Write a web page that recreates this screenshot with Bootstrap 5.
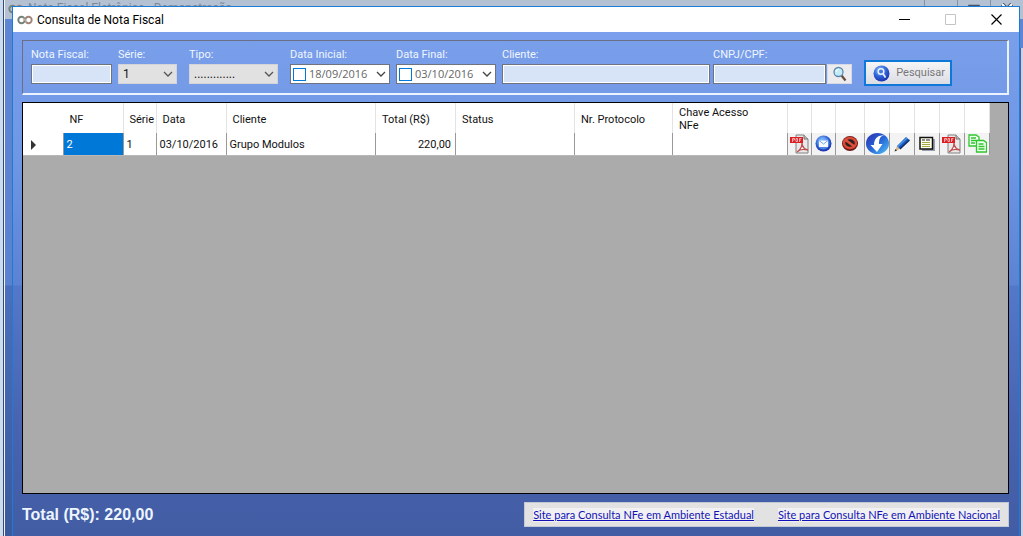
<!DOCTYPE html>
<html lang="pt-BR">
<head>
<meta charset="utf-8">
<meta name="viewport" content="width=device-width, initial-scale=1">
<title>Consulta de Nota Fiscal</title>
<link href="https://cdn.jsdelivr.net/npm/bootstrap@5.3.0/dist/css/bootstrap.min.css" rel="stylesheet">
<style>
body{font:11px/14px Roboto,"Liberation Sans",sans-serif;color:#111;background:#d9e6f6;overflow:hidden}
.parent-win{inset:0 0 0 0;border-left:3px solid #c9dcf2;background:linear-gradient(#5d86d4,#5b82d0 285px,#4a6fbc 286px,#3a5a9e)}
.parent-win::before{content:"";position:absolute;inset:0 auto 0 0;width:2px;border-left:1px solid #3d4a60;background:#eef4fb}
.parent-bar{height:19px;background:#b3c1d3;color:#7d8896;font:12px/16px Roboto,sans-serif;padding-left:5px}
.parent-edge{inset:48px 0 0 auto;width:3px;background:#4a5f96;border-right:2px solid #c8d2e8}
.caption-box{width:33px;border-left:1px solid #8492a6;color:#4b5563}
.dialog-win{margin:6px 3px 0 12px;height:calc(100vh - 6px);border:1px solid #1c7bd4;border-bottom:0;background:linear-gradient(#7ca0ec,#6f97e4 150px,#5c82d2 278px,#5478c8 279px,#4863b0 420px,#425da3)}
.titlebar{height:25px;background:#fff;font:12px/24px Roboto,sans-serif;color:#000}
.caption-btn{width:46px;height:25px;border:0;background:none;padding:0}
.work{padding:8px 10px 9px 9px}
.filters{height:55px;border:1px solid #6b6f86;border-right:2px solid #eaf3ff;border-bottom:2px solid #eaf3ff;padding:7px 55px 0 8px;gap:3px;color:#f0f6ff}
.filters label{display:block;line-height:14px;height:16px;white-space:nowrap}
.s6{margin-left:3px}
.s12{margin-left:9px}
.field{display:block;width:100%;height:20px;border:1px solid #6d7480;outline:1px solid #fff;outline-offset:-2px;border-radius:0;background:#d7e4f8;padding:0 4px}
.combo{height:20px;min-height:0;border:1px solid #d2d4d8;border-radius:0;padding:0 18px 0 4px;font-size:12px;line-height:18px;color:#111;background:#e1e1e1 url("data:image/svg+xml,%3Csvg xmlns='http://www.w3.org/2000/svg' viewBox='0 0 10 6'%3E%3Cpath d='M1 1l4 4 4-4' fill='none' stroke='%23555' stroke-width='1.3'/%3E%3C/svg%3E") no-repeat right 3px center/10px 6px}
.datebox{width:100px;height:20px;background:#fff;border:1px solid #6d7480;padding:0 3px 0 2px}
.datebox input[type=text]{width:64px;border:0;padding:0;background:none;font:11px/18px "Open Sans",sans-serif;color:#666}
.datebox button{border:0;background:none;padding:0;line-height:0}
.tick{appearance:none;width:13px;height:13px;border:1px solid #0078d7;background:#fff;margin:0 3px 0 0;flex:none}
.lookup{width:25px;height:20px;border:1px solid #d5dae4;background:#ececee;padding:0;margin:16px 0 0 -2px}
.search-btn{width:88px;height:26px;border:2px solid #0d78d8;border-radius:0;background:linear-gradient(#f5f5f7,#dcdde4);padding:0 5px 0 7px;margin-top:12px;font:11px/20px Roboto,sans-serif;color:#777}
.gridview{margin-top:7px;border:1px solid #000;background:#ababab;padding-right:18px}
.gridview table{width:100%;table-layout:fixed;border-collapse:collapse;background:#fff}
.gridview th{height:30px;font-weight:400;padding:2px 0 0 6px;border-right:1px solid #e3e3e3;white-space:nowrap;line-height:13px;vertical-align:middle}
.gridview td{height:22px;padding:2px 4px 0 3px;border-right:1px solid #999;border-bottom:1px solid #b8b8b8;white-space:nowrap}
.gridview th:first-child{border-right-color:#fff}
.gridview td.act{padding:0;text-align:center;background:#f3f3f3}
.act button{border:0;background:none;padding:0;display:block;margin:auto;line-height:0}
.gridview td.chosen{background:#0078d7;color:#fff}
.total-line{font:bold 16px/24px "Liberation Sans",sans-serif;color:#eef5ff}
.linkbox{height:25px;background:#e2e2e2;border:1px solid #c3c9d4;padding:0 8px;gap:24px;font-family:Lato,sans-serif}
.linkbox a{color:#1111b5;background:#f1f1f3}
</style>
</head>
<body>
<svg width="0" height="0" class="position-absolute" aria-hidden="true">
<defs>
<radialGradient id="ball" cx=".4" cy=".3" r=".8"><stop offset="0" stop-color="#8cc2ff"/><stop offset=".5" stop-color="#2f62d4"/><stop offset="1" stop-color="#1522a0"/></radialGradient>
<linearGradient id="orb" x1="0" y1="0" x2="1" y2="1"><stop offset="0" stop-color="#2d2fae"/><stop offset=".5" stop-color="#2766d8"/><stop offset="1" stop-color="#53c4f4"/></linearGradient>
<symbol id="pdf" viewBox="0 0 20 20"><path d="M6 1h8l4 4v14H6z" fill="#e9e9e9" stroke="#808080"/><path d="M14 1v4h4" fill="#bbb" stroke="#777"/><path d="M7 18c3-2 5-5 5-9 0 4 3 7 6 7-4-1-8-1-11 2z" fill="#fff" stroke="#c05050" stroke-width="1.300"/><path d="M0 3h13v6H0z" fill="#dc1f24"/><path d="M2.500 8V4.500h2v1.500h-2M6 4.500v3h1.500V4.500zM9.500 8V4.500h2M9.500 6h1.500" fill="none" stroke="#ffc9c9" stroke-width=".8"/></symbol>
<symbol id="rings" viewBox="0 0 16 10"><circle cx="4.500" cy="5" r="3.200" fill="none" stroke="#75807a" stroke-width="1.900"/><circle cx="11.500" cy="5" r="3.200" fill="none" stroke="#a08478" stroke-width="1.900"/><path d="M6 3l4 4" stroke="#b9b4a8" stroke-width="1.500"/></symbol>
</defs>
</svg>
<div class="parent-win position-absolute">
  <div class="parent-bar d-flex overflow-hidden">
    <svg width="16" height="10" class="me-1 mt-1"><use href="#rings"/></svg>
    <span>Nota Fiscal Eletrônica - Demonstração</span>
    <span class="caption-box ms-auto"></span>
    <span class="caption-box text-center"><svg width="12" height="12"><path d="M1 2.500h10v9H1zM4 6h4v3H4z" fill="none" stroke="#465064" stroke-width="1.500"/></svg></span>
    <span class="caption-box text-center"><svg width="12" height="12"><path d="M1 1l10 10M11 1L1 11" stroke="#465064" stroke-width="4"/><path d="M1 1l10 10M11 1L1 11" stroke="#fff" stroke-width="2"/></svg></span>
  </div>
  <div class="parent-edge position-absolute"></div>
</div>
<main class="dialog-win position-relative d-flex flex-column">
  <header class="titlebar d-flex align-items-center">
    <svg width="16" height="10" class="ms-1"><use href="#rings"/></svg>
    <span class="ms-1">Consulta de Nota Fiscal</span>
    <button class="caption-btn ms-auto" aria-label="Minimizar"><svg width="11" height="11" class="d-block mx-auto"><path d="M0 5.500h11" stroke="#000"/></svg></button>
    <button class="caption-btn" aria-label="Maximizar" disabled><svg width="11" height="11" class="d-block mx-auto"><path d="M.5.500h10v10H.5z" fill="none" stroke="#c4c4c4"/></svg></button>
    <button class="caption-btn" aria-label="Fechar"><svg width="11" height="11" class="d-block mx-auto"><path d="M.5.500l10 10M10.500.500l-10 10" stroke="#000" stroke-width="1.200"/></svg></button>
  </header>
  <div class="work flex-grow-1 d-flex flex-column">
    <form class="filters d-flex align-items-start">
      <div style="width:81px"><label for="nf">Nota Fiscal:</label><input id="nf" class="field"></div>
      <div class="s6" style="width:59px"><label for="serie">Série:</label><select id="serie" class="form-select combo"><option>1</option></select></div>
      <div class="s12" style="width:89px"><label for="tipo">Tipo:</label><select id="tipo" class="form-select combo"><option>.............</option></select></div>
      <div class="s12"><label for="di">Data Inicial:</label><div class="datebox d-flex align-items-center"><input type="checkbox" class="tick" aria-label="Usar data inicial"><input type="text" id="di" value="18/09/2016"><button type="button" class="ms-auto" aria-label="Abrir calendário"><svg width="10" height="6"><path d="M1 1l4 4 4-4" fill="none" stroke="#444" stroke-width="1.300"/></svg></button></div></div>
      <div class="s6"><label for="df">Data Final:</label><div class="datebox d-flex align-items-center"><input type="checkbox" class="tick" aria-label="Usar data final"><input type="text" id="df" value="03/10/2016"><button type="button" class="ms-auto" aria-label="Abrir calendário"><svg width="10" height="6"><path d="M1 1l4 4 4-4" fill="none" stroke="#444" stroke-width="1.300"/></svg></button></div></div>
      <div class="s6 flex-grow-1"><label for="cli">Cliente:</label><input id="cli" class="field"></div>
      <div style="width:113px"><label for="doc">CNPJ/CPF:</label><input id="doc" class="field"></div>
      <button type="button" class="lookup" aria-label="Localizar"><svg width="16" height="16" viewBox="0 0 16 16" class="d-block mx-auto"><path d="M9.500 9.500l4 5" stroke="#6a4a3c" stroke-width="2.200"/><circle cx="6.500" cy="6" r="4.500" fill="#c4ecfb" stroke="#5c87a8" stroke-width="1.300"/><path d="M4 6a3 3 0 0 1 3-3" stroke="#fff" fill="none"/></svg></button>
      <button type="button" class="search-btn s12 d-flex align-items-center justify-content-between"><svg width="17" height="17" viewBox="0 0 17 17"><circle cx="8.500" cy="8.500" r="8" fill="url(#ball)"/><circle cx="8" cy="6.500" r="2.800" fill="#4478e0" stroke="#e8f2ff" stroke-width="1.500"/><path d="M10 8.500l2.500 4" stroke="#e8f2ff" stroke-width="1.800"/></svg>Pesquisar</button>
    </form>
    <section class="gridview flex-grow-1">
      <table>
        <colgroup><col style="width:40px"><col style="width:60px"><col style="width:33px"><col style="width:70px"><col><col style="width:80px"><col style="width:119px"><col style="width:98px"><col style="width:115px"><col style="width:24px"><col style="width:24px"><col style="width:29px"><col style="width:25px"><col style="width:25px"><col style="width:25px"><col style="width:25px"><col style="width:25px"></colgroup>
        <thead><tr><th></th><th>NF</th><th>Série</th><th>Data</th><th>Cliente</th><th>Total (R$)</th><th>Status</th><th>Nr. Protocolo</th><th>Chave Acesso<br>NFe</th><th></th><th></th><th></th><th></th><th></th><th></th><th></th><th></th></tr></thead>
        <tbody><tr>
          <td><svg width="12" height="10" class="d-block ms-1"><path d="M1 0l5 5-5 5z" fill="#333"/></svg></td>
          <td class="chosen">2</td><td>1</td><td>03/10/2016</td><td>Grupo Modulos</td><td class="text-end">220,00</td><td></td><td></td><td></td>
          <td class="act"><button aria-label="PDF"><svg width="20" height="20"><use href="#pdf"/></svg></button></td>
          <td class="act"><button aria-label="E-mail"><svg width="17" height="17" viewBox="0 0 17 17"><circle cx="8.500" cy="8.500" r="8" fill="url(#ball)"/><circle cx="8.500" cy="8.500" r="6" fill="#78b4ff" opacity=".5"/><path d="M4 5.500h9v6.500H4z" fill="#f6faff"/><path d="M4 5.500l4.500 3.500L13 5.500" fill="none" stroke="#7da6e8"/></svg></button></td>
          <td class="act"><button aria-label="Cancelar"><svg width="18" height="17" viewBox="0 0 18 17"><ellipse cx="9" cy="8.500" rx="8" ry="7.500" fill="#6e1717"/><ellipse cx="9" cy="8" rx="6" ry="5" fill="#2d2020" stroke="#d84a36" stroke-width="2.500"/><path d="M4.500 5l9 6.500" stroke="#e0513c" stroke-width="2.500"/></svg></button></td>
          <td class="act"><button aria-label="Baixar"><svg width="23" height="21" viewBox="0 0 23 21"><ellipse cx="11.500" cy="10.500" rx="11.500" ry="10.500" fill="url(#orb)"/><path d="M19 3c-4-1-6 2-6 8h3.500L11 19l-6.500-7H8c0-6 4-11 11-9z" fill="#fff"/></svg></button></td>
          <td class="act"><button aria-label="Editar"><svg width="18" height="17" viewBox="0 0 18 17"><path d="M2 16l2-5 3 3z" fill="#d9b48a"/><path d="M1.500 16.500l1-2.500 1.500 1.500z" fill="#222"/><path d="M4 11L13 2l3.500 3L7 14z" fill="#1557b8"/><path d="M5 11.500L14 3" stroke="#4d9af0" stroke-width="1.200"/><path d="M7 14l9.500-9" stroke="#0b2866" stroke-width="1.300"/></svg></button></td>
          <td class="act"><button aria-label="Detalhes"><svg width="16" height="15" viewBox="0 0 16 15"><path d="M3 3h13v12H3z" fill="#9aa0ad"/><path d="M1 1.500h12.500v11.500H1z" fill="#fffff0" stroke="#111" stroke-width="1.500"/><path d="M3 4h3m1 0h4" stroke="#222" stroke-width="1.200"/><path d="M3 6.500h8M3 8.500h8M3 10.500h8" stroke="#a8a840"/></svg></button></td>
          <td class="act"><button aria-label="PDF"><svg width="20" height="20"><use href="#pdf"/></svg></button></td>
          <td class="act"><button aria-label="Copiar"><svg width="19" height="19" viewBox="0 0 19 19"><g fill="#f0fff0" stroke="#2fc62f" stroke-width="1.300"><path d="M1 1h7l3 2v9H1z"/><path d="M8.500 6.500h7l3 2V18h-10z"/><path d="M3 4h5M3 6.500h5M3 9h4M10.500 10h5M10.500 12.500h6M10.500 15h6"/></g></svg></button></td>
        </tr></tbody>
      </table>
    </section>
    <footer class="d-flex justify-content-between align-items-center pt-2">
      <div class="total-line">Total (R$): 220,00</div>
      <div class="linkbox d-flex align-items-center"><a href="#">Site para Consulta NFe em Ambiente Estadual</a><a href="#">Site para Consulta NFe em Ambiente Nacional</a></div>
    </footer>
  </div>
</main>
<script src="https://cdn.jsdelivr.net/npm/bootstrap@5.3.0/dist/js/bootstrap.bundle.min.js"></script>
</body>
</html>
